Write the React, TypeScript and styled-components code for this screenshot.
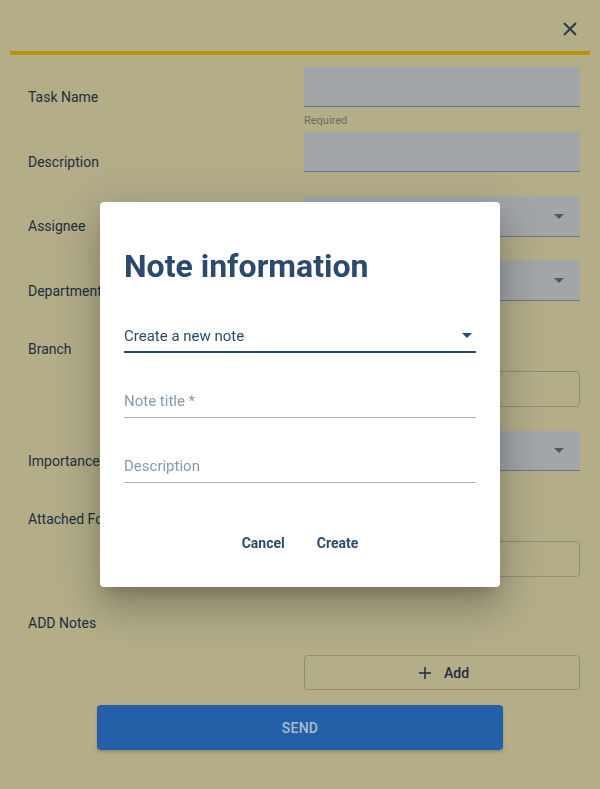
import { ReactElement } from 'react';
import styled, { createGlobalStyle } from 'styled-components';

const GlobalStyle = createGlobalStyle`
  html, body {
    margin: 0;
    padding: 0;
    background: #b3ae88;
    font-family: Roboto, "Liberation Sans", Arial, sans-serif;
  }
`;

const Page = styled.div`
  height: 789px;
  overflow: hidden;
  background: #b3ae88;
`;

const Header = styled.div`
  height: 51px;
  display: flex;
  justify-content: flex-end;
  align-items: flex-start;
  padding-right: 22px;
  box-sizing: border-box;
  padding-top: 21px;
`;

const CloseButton = styled.button`
  width: 16px;
  height: 16px;
  padding: 0;
  border: none;
  background: none;
  display: flex;
  color: #2d3a4a;
`;

const AccentBar = styled.div`
  height: 4px;
  margin: 0 10px;
  background: #b8940a;
`;

const Form = styled.div`
  padding: 12px 20px 0 28px;
  display: flex;
  flex-direction: column;
`;

interface RowProps {
  $top: number;
}

const Row = styled.div<RowProps>`
  display: grid;
  grid-template-columns: 1fr 276px;
  align-items: start;
  margin-top: ${p => p.$top}px;
`;

interface OffsetProps {
  $offset: number;
}

const Label = styled.div<OffsetProps>`
  margin-top: ${p => p.$offset}px;
  font-size: 14px;
  line-height: 18px;
  color: #1e2d40;
  white-space: nowrap;
`;

const FieldColumn = styled.div<OffsetProps>`
  margin-top: ${p => p.$offset}px;
  display: flex;
  flex-direction: column;
`;

const FilledField = styled.div`
  height: 39px;
  background: #a2a6a8;
  border-bottom: 1px solid #6a7686;
  display: flex;
  align-items: center;
  justify-content: flex-end;
  padding-right: 16px;
`;

const Helper = styled.div`
  font-size: 11px;
  line-height: 13px;
  margin-top: 7px;
  color: #6b6c5e;
`;

const OutlinedField = styled.div`
  height: 34px;
  border: 1px solid #8f8d78;
  border-radius: 4px;
`;

const AddButton = styled.button`
  height: 35px;
  border: 1px solid #8f8d78;
  border-radius: 4px;
  background: none;
  display: flex;
  align-items: center;
  justify-content: center;
  gap: 13px;
  font-family: inherit;
  font-size: 14px;
  font-weight: 500;
  color: #1e2d40;
  padding: 0 0 0 4px;
`;

const SendButton = styled.button`
  align-self: center;
  width: 406px;
  height: 45px;
  margin: 15px 0 0 -8px;
  border: none;
  border-radius: 4px;
  background: #2360a8;
  color: #a9bccf;
  font-family: inherit;
  font-size: 14px;
  font-weight: 500;
  letter-spacing: 0.3px;
  box-shadow: 0 2px 3px rgba(0, 0, 0, 0.2);
`;

const Backdrop = styled.div`
  position: fixed;
  inset: 0;
  display: flex;
  align-items: center;
  justify-content: center;
`;

const Dialog = styled.div`
  width: 400px;
  height: 385px;
  box-sizing: border-box;
  background: #fff;
  border-radius: 4px;
  padding: 44px 24px 0;
  display: flex;
  flex-direction: column;
  box-shadow:
    0 11px 15px -7px rgba(0, 0, 0, 0.2),
    0 24px 38px 3px rgba(0, 0, 0, 0.14),
    0 9px 46px 8px rgba(0, 0, 0, 0.12);
`;

const Title = styled.h2`
  margin: 0;
  font-size: 32px;
  line-height: 40px;
  font-weight: 700;
  color: #2b4a6d;
`;

const SelectBox = styled.div`
  margin-top: 34px;
  height: 31px;
  border-bottom: 2px solid #2b4a6d;
  display: flex;
  align-items: center;
  justify-content: space-between;
  padding-right: 4px;
  font-size: 15px;
  color: #2b4a6d;
`;

const TextInput = styled.div`
  margin-top: 29px;
  height: 35px;
  border-bottom: 1px solid #a3b1bf;
  display: flex;
  align-items: flex-end;
  font-size: 15px;
  line-height: 20px;
  color: #8799ad;

  & > span {
    margin-bottom: 6px;
  }
`;

const Actions = styled.div`
  margin-top: 52px;
  display: flex;
  justify-content: center;
  gap: 32px;
`;

const TextButton = styled.button`
  border: none;
  background: none;
  padding: 0;
  font-family: inherit;
  font-size: 14px;
  font-weight: 700;
  color: #2b4a6d;
`;

interface ArrowProps {
  color: string;
}

function DropArrow({ color }: ArrowProps): ReactElement {
  return (
    <svg width="10" height="5" viewBox="0 0 10 5">
      <path d="M0 0h10L5 5z" fill={color} />
    </svg>
  );
}

const rows = [
  { label: 'Task Name', top: 0, labelOffset: 21, fieldOffset: 0, kind: 'required' },
  { label: 'Description', top: 5, labelOffset: 21, fieldOffset: 0, kind: 'filled' },
  { label: 'Assignee', top: 25, labelOffset: 20, fieldOffset: 0, kind: 'select' },
  { label: 'Department', top: 24, labelOffset: 21, fieldOffset: 0, kind: 'select' },
  { label: 'Branch', top: 24, labelOffset: 15, fieldOffset: 46, kind: 'outlined' },
  { label: 'Importance', top: 24, labelOffset: 21, fieldOffset: 0, kind: 'select' },
  { label: 'Attached Forms', top: 24, labelOffset: 15, fieldOffset: 46, kind: 'outlined' },
  { label: 'ADD Notes', top: 24, labelOffset: 13, fieldOffset: 54, kind: 'add' },
];

function App(): ReactElement {
  const FormRows = rows.map((row, key) => {
    let field: ReactElement;

    if (row.kind === 'required') {
      field = (
        <>
          <FilledField />
          <Helper>Required</Helper>
        </>
      );
    } else if (row.kind === 'filled') {
      field = <FilledField />;
    } else if (row.kind === 'select') {
      field = <FilledField><DropArrow color="#4a5a6c" /></FilledField>;
    } else if (row.kind === 'outlined') {
      field = <OutlinedField />;
    } else {
      field = (
        <AddButton>
          <svg width="12" height="12" viewBox="0 0 12 12">
            <path d="M6 0v12M0 6h12" stroke="#1e2d40" strokeWidth="1.5" />
          </svg>
          Add
        </AddButton>
      );
    }

    return (
      <Row $top={row.top} key={key}>
        <Label $offset={row.labelOffset}>{row.label}</Label>
        <FieldColumn $offset={row.fieldOffset}>{field}</FieldColumn>
      </Row>
    );
  });

  return (
    <Page>
      <GlobalStyle />
      <Header>
        <CloseButton>
          <svg width="16" height="16" viewBox="0 0 16 16">
            <path d="M2 2l12 12M14 2L2 14" stroke="currentColor" strokeWidth="2" />
          </svg>
        </CloseButton>
      </Header>
      <AccentBar />
      <Form>
        {FormRows}
        <SendButton>SEND</SendButton>
      </Form>
      <Backdrop>
        <Dialog>
          <Title>Note information</Title>
          <SelectBox>
            Create a new note
            <DropArrow color="#2b4a6d" />
          </SelectBox>
          <TextInput><span>Note title *</span></TextInput>
          <TextInput><span>Description</span></TextInput>
          <Actions>
            <TextButton>Cancel</TextButton>
            <TextButton>Create</TextButton>
          </Actions>
        </Dialog>
      </Backdrop>
    </Page>
  );
}

export default App;
